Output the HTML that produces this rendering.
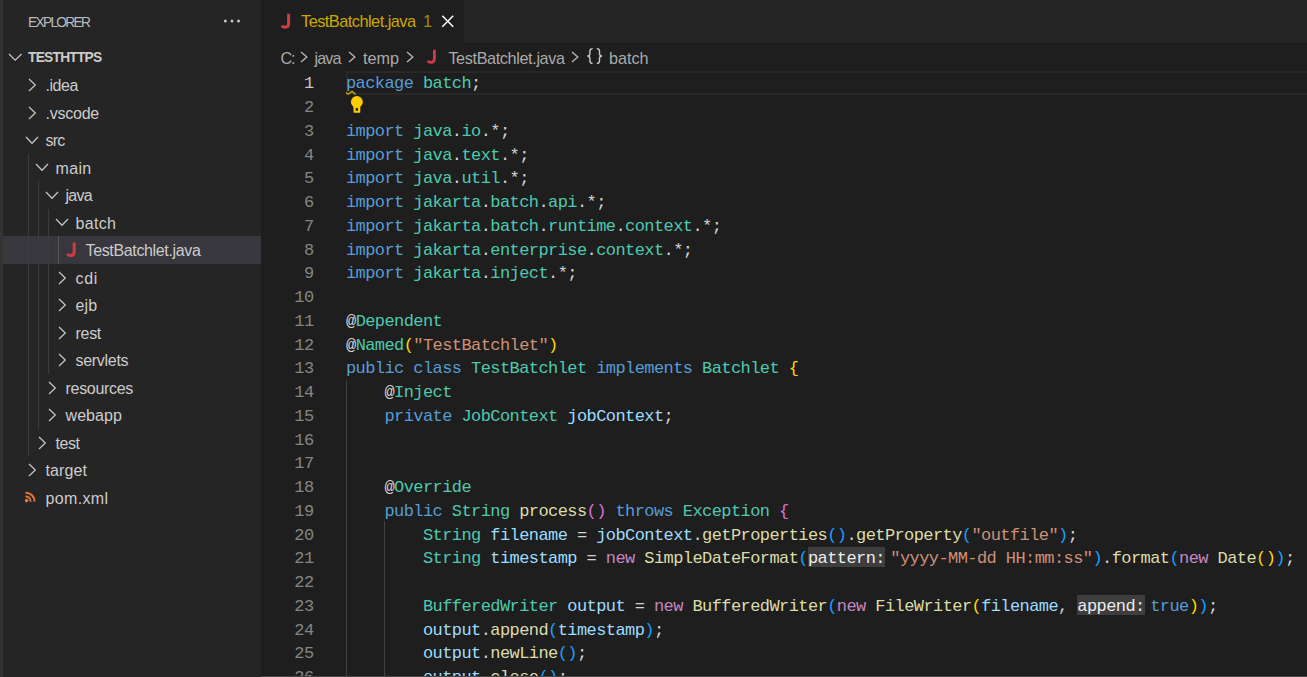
<!DOCTYPE html>
<html><head><meta charset="utf-8">
<style>
*{margin:0;padding:0;box-sizing:border-box}
html,body{width:1307px;height:677px;overflow:hidden;background:#1e1e1e}
body{position:relative;font-family:"Liberation Sans",sans-serif}
.abs{position:absolute}
.t{position:absolute;white-space:pre}
.tree{color:#cccccc;font-size:16px}
.code{position:absolute;left:346px;white-space:pre;font-family:"Liberation Mono",monospace;font-size:17px;letter-spacing:-0.58px;line-height:23.75px;height:23.75px;padding-top:1px;color:#d4d4d4}
.ln{position:absolute;white-space:pre;font-family:"Liberation Mono",monospace;font-size:17px;letter-spacing:-0.58px;line-height:23.75px;padding-top:1px;color:#858585;text-align:right;width:59.6px;left:254px}
.ln.cur{color:#c6c6c6}
.k{color:#569cd6}.ty{color:#4ec9b0}.v{color:#9cdcfe}.f{color:#dcdcaa}.s{color:#ce9178}.n{color:#c586c0}
.b1{color:#ffd700}.b2{color:#da70d6}.b3{color:#179fff}
.hint{display:inline-block;color:#ececec;margin-right:5px}
</style></head><body>
<div class="abs" style="left:0;top:0;width:3px;height:677px;background:#333333"></div>
<div class="abs" style="left:3px;top:0;width:258px;height:677px;background:#252526"></div>
<!-- explorer header -->
<div class="t" style="left:28px;top:0.5px;height:43px;line-height:43px;font-size:13.75px;color:#bbbbbb;letter-spacing:-1.7px">EXPLORER</div>
<svg class="abs" style="left:222px;top:17px" width="20" height="8"><circle cx="3.4" cy="4" r="1.5" fill="#c5c5c5"/><circle cx="10" cy="4" r="1.5" fill="#c5c5c5"/><circle cx="16.5" cy="4" r="1.5" fill="#c5c5c5"/></svg>
<!-- section header -->
<svg class="abs" style="left:8px;top:53px" width="15" height="9"><polyline points="1,1 7.2,7.2 13.6,1" fill="none" stroke="#c5c5c5" stroke-width="1.25"/></svg>
<div class="t" style="left:28px;top:43.75px;height:27.5px;line-height:27.5px;font-size:13.75px;font-weight:bold;color:#cccccc;letter-spacing:-0.75px">TESTHTTPS</div>
<div class="abs" style="left:3px;top:236.25px;width:258px;height:27.5px;background:#37373d"></div>
<div class="abs" style="left:28px;top:153.75px;width:1px;height:302.50px;background:#3b3b3c"></div>
<div class="abs" style="left:38px;top:181.25px;width:1px;height:247.50px;background:#3b3b3c"></div>
<div class="abs" style="left:48px;top:208.75px;width:1px;height:165.00px;background:#3b3b3c"></div>
<div class="abs" style="left:58px;top:236.25px;width:1px;height:27.50px;background:#585858"></div>
<svg class="abs" style="left:27.80px;top:78.00px" width="9" height="14"><polyline points="1,1 7.3,7 1,13" fill="none" stroke="#c5c5c5" stroke-width="1.25"/></svg>
<div class="t tree" style="left:45.50px;top:72.25px;height:27.5px;line-height:27.5px;letter-spacing:-0.47px">.idea</div>
<svg class="abs" style="left:27.80px;top:105.50px" width="9" height="14"><polyline points="1,1 7.3,7 1,13" fill="none" stroke="#c5c5c5" stroke-width="1.25"/></svg>
<div class="t tree" style="left:45.50px;top:99.75px;height:27.5px;line-height:27.5px;letter-spacing:-0.23px">.vscode</div>
<svg class="abs" style="left:25.30px;top:135.50px" width="14" height="9"><polyline points="1,1 7,7.3 13,1" fill="none" stroke="#c5c5c5" stroke-width="1.25"/></svg>
<div class="t tree" style="left:45.50px;top:127.25px;height:27.5px;line-height:27.5px;letter-spacing:-0.75px">src</div>
<svg class="abs" style="left:35.30px;top:163.00px" width="14" height="9"><polyline points="1,1 7,7.3 13,1" fill="none" stroke="#c5c5c5" stroke-width="1.25"/></svg>
<div class="t tree" style="left:55.50px;top:154.75px;height:27.5px;line-height:27.5px;letter-spacing:0.33px">main</div>
<svg class="abs" style="left:45.30px;top:190.50px" width="14" height="9"><polyline points="1,1 7,7.3 13,1" fill="none" stroke="#c5c5c5" stroke-width="1.25"/></svg>
<div class="t tree" style="left:65.50px;top:182.25px;height:27.5px;line-height:27.5px;letter-spacing:-0.77px">java</div>
<svg class="abs" style="left:55.30px;top:218.00px" width="14" height="9"><polyline points="1,1 7,7.3 13,1" fill="none" stroke="#c5c5c5" stroke-width="1.25"/></svg>
<div class="t tree" style="left:75.50px;top:209.75px;height:27.5px;line-height:27.5px;letter-spacing:0.32px">batch</div>
<svg class="abs" style="left:65.80px;top:241.75px" width="12" height="16"><path d="M8.2 0.5 V10 Q8.2 13.6 4.6 13.6 Q2.6 13.6 1.4 11.8" fill="none" stroke="#cc3e44" stroke-width="3"/></svg>
<div class="t tree" style="left:85.50px;top:237.25px;height:27.5px;line-height:27.5px;letter-spacing:-0.35px">TestBatchlet.java</div>
<svg class="abs" style="left:57.80px;top:270.50px" width="9" height="14"><polyline points="1,1 7.3,7 1,13" fill="none" stroke="#c5c5c5" stroke-width="1.25"/></svg>
<div class="t tree" style="left:75.50px;top:264.75px;height:27.5px;line-height:27.5px;letter-spacing:0.7px">cdi</div>
<svg class="abs" style="left:57.80px;top:298.00px" width="9" height="14"><polyline points="1,1 7.3,7 1,13" fill="none" stroke="#c5c5c5" stroke-width="1.25"/></svg>
<div class="t tree" style="left:75.50px;top:292.25px;height:27.5px;line-height:27.5px;letter-spacing:0.1px">ejb</div>
<svg class="abs" style="left:57.80px;top:325.50px" width="9" height="14"><polyline points="1,1 7.3,7 1,13" fill="none" stroke="#c5c5c5" stroke-width="1.25"/></svg>
<div class="t tree" style="left:75.50px;top:319.75px;height:27.5px;line-height:27.5px;letter-spacing:-0.3px">rest</div>
<svg class="abs" style="left:57.80px;top:353.00px" width="9" height="14"><polyline points="1,1 7.3,7 1,13" fill="none" stroke="#c5c5c5" stroke-width="1.25"/></svg>
<div class="t tree" style="left:75.50px;top:347.25px;height:27.5px;line-height:27.5px;letter-spacing:-0.3px">servlets</div>
<svg class="abs" style="left:47.80px;top:380.50px" width="9" height="14"><polyline points="1,1 7.3,7 1,13" fill="none" stroke="#c5c5c5" stroke-width="1.25"/></svg>
<div class="t tree" style="left:65.50px;top:374.75px;height:27.5px;line-height:27.5px;letter-spacing:-0.3px">resources</div>
<svg class="abs" style="left:47.80px;top:408.00px" width="9" height="14"><polyline points="1,1 7.3,7 1,13" fill="none" stroke="#c5c5c5" stroke-width="1.25"/></svg>
<div class="t tree" style="left:65.50px;top:402.25px;height:27.5px;line-height:27.5px;letter-spacing:0.08px">webapp</div>
<svg class="abs" style="left:37.80px;top:435.50px" width="9" height="14"><polyline points="1,1 7.3,7 1,13" fill="none" stroke="#c5c5c5" stroke-width="1.25"/></svg>
<div class="t tree" style="left:55.50px;top:429.75px;height:27.5px;line-height:27.5px;letter-spacing:-0.43px">test</div>
<svg class="abs" style="left:27.80px;top:463.00px" width="9" height="14"><polyline points="1,1 7.3,7 1,13" fill="none" stroke="#c5c5c5" stroke-width="1.25"/></svg>
<div class="t tree" style="left:45.50px;top:457.25px;height:27.5px;line-height:27.5px;letter-spacing:0.12px">target</div>
<svg class="abs" style="left:24px;top:491.25px" width="13" height="13"><circle cx="2.6" cy="9.6" r="1.8" fill="#e37933"/><path d="M1.5 5.6 A4.6 4.6 0 0 1 6.6 10.6" fill="none" stroke="#e37933" stroke-width="1.9"/><path d="M1.5 1.8 A8.4 8.4 0 0 1 10.4 10.6" fill="none" stroke="#e37933" stroke-width="1.9"/></svg>
<div class="t tree" style="left:45.50px;top:484.75px;height:27.5px;line-height:27.5px;letter-spacing:0.35px">pom.xml</div>
<!-- tabs -->
<div class="abs" style="left:261px;top:0;width:1046px;height:43px;background:#252526"></div>
<div class="abs" style="left:261px;top:0;width:203px;height:43px;background:#1e1e1e"></div>
<svg class="abs" style="left:280px;top:13px" width="13" height="17"><path d="M8.6 0.8 V10.5 Q8.6 14.2 5 14.2 Q3 14.2 1.8 12.6" fill="none" stroke="#cc3e44" stroke-width="3"/></svg>
<div class="t" style="left:301px;top:0px;height:43px;line-height:43px;font-size:16.4px;color:#cca700;letter-spacing:-0.55px">TestBatchlet.java</div>
<div class="t" style="left:423px;top:0;height:43px;line-height:43px;font-size:16.4px;color:#a08a0c">1</div>
<svg class="abs" style="left:441px;top:15px" width="13" height="13"><path d="M1.3 0.8 L12.2 11.7 M12.2 0.8 L1.3 11.7" stroke="#ffffff" stroke-width="1.5"/></svg>
<!-- breadcrumbs -->
<div class="t bc" style="left:280.5px;top:43.5px;height:28px;line-height:28px;font-size:16.2px;color:#a9a9a9;letter-spacing:-1.2px">C:</div>
<svg class="abs" style="left:300px;top:51px" width="9" height="12"><polyline points="1,1 6.8,6 1,11" fill="none" stroke="#b4b4b4" stroke-width="1.4"/></svg>
<div class="t bc" style="left:314.5px;top:43.5px;height:28px;line-height:28px;font-size:16.2px;color:#a9a9a9;letter-spacing:-0.9px">java</div>
<svg class="abs" style="left:348.2px;top:51px" width="9" height="12"><polyline points="1,1 6.8,6 1,11" fill="none" stroke="#b4b4b4" stroke-width="1.4"/></svg>
<div class="t bc" style="left:363px;top:43.5px;height:28px;line-height:28px;font-size:16.2px;color:#a9a9a9">temp</div>
<svg class="abs" style="left:405.9px;top:51px" width="9" height="12"><polyline points="1,1 6.8,6 1,11" fill="none" stroke="#b4b4b4" stroke-width="1.4"/></svg>
<svg class="abs" style="left:426px;top:49px" width="13" height="16"><path d="M8.4 0.8 V9.8 Q8.4 13.4 4.9 13.4 Q2.9 13.4 1.7 11.8" fill="none" stroke="#cc3e44" stroke-width="2.8"/></svg>
<div class="t bc" style="left:448.4px;top:43.5px;height:28px;line-height:28px;font-size:16.2px;color:#a9a9a9;letter-spacing:-0.36px">TestBatchlet.java</div>
<svg class="abs" style="left:571.2px;top:51px" width="9" height="12"><polyline points="1,1 6.8,6 1,11" fill="none" stroke="#b4b4b4" stroke-width="1.4"/></svg>
<svg class="abs" style="left:586px;top:47px" width="18" height="18"><path d="M6.6 1.6 Q3.9 1.6 3.9 4 V6.9 Q3.9 8.6 1.4 9 Q3.9 9.4 3.9 11.1 V14 Q3.9 16.4 6.6 16.4 M10.8 1.6 Q13.5 1.6 13.5 4 V6.9 Q13.5 8.6 16 9 Q13.5 9.4 13.5 11.1 V14 Q13.5 16.4 10.8 16.4" fill="none" stroke="#c8c8c8" stroke-width="1.4"/></svg>
<div class="t bc" style="left:609px;top:43.5px;height:28px;line-height:28px;font-size:16.2px;color:#a9a9a9">batch</div>
<!-- editor -->
<div class="abs" style="left:346px;top:71px;width:970px;height:24px;border:2px solid #282828"></div>
<div class="abs" style="left:346px;top:380px;width:1px;height:297px;background:#404040"></div>
<div class="abs" style="left:384px;top:521px;width:1px;height:156px;background:#404040"></div>
<div class="abs" style="left:807.8px;top:547px;width:77.4px;height:20px;background:#3e3e3e"></div>
<div class="abs" style="left:1076.9px;top:595px;width:68.3px;height:20px;background:#3e3e3e"></div>
<div class="ln cur" style="top:71.25px">1</div>
<div class="code" style="top:71.25px"><span class="k">package</span> <span class="ty">batch</span>;</div>
<div class="ln" style="top:95.00px">2</div>
<div class="ln" style="top:118.75px">3</div>
<div class="code" style="top:118.75px"><span class="k">import</span> <span class="ty">java</span>.<span class="ty">io</span>.*;</div>
<div class="ln" style="top:142.50px">4</div>
<div class="code" style="top:142.50px"><span class="k">import</span> <span class="ty">java</span>.<span class="ty">text</span>.*;</div>
<div class="ln" style="top:166.25px">5</div>
<div class="code" style="top:166.25px"><span class="k">import</span> <span class="ty">java</span>.<span class="ty">util</span>.*;</div>
<div class="ln" style="top:190.00px">6</div>
<div class="code" style="top:190.00px"><span class="k">import</span> <span class="ty">jakarta</span>.<span class="ty">batch</span>.<span class="ty">api</span>.*;</div>
<div class="ln" style="top:213.75px">7</div>
<div class="code" style="top:213.75px"><span class="k">import</span> <span class="ty">jakarta</span>.<span class="ty">batch</span>.<span class="ty">runtime</span>.<span class="ty">context</span>.*;</div>
<div class="ln" style="top:237.50px">8</div>
<div class="code" style="top:237.50px"><span class="k">import</span> <span class="ty">jakarta</span>.<span class="ty">enterprise</span>.<span class="ty">context</span>.*;</div>
<div class="ln" style="top:261.25px">9</div>
<div class="code" style="top:261.25px"><span class="k">import</span> <span class="ty">jakarta</span>.<span class="ty">inject</span>.*;</div>
<div class="ln" style="top:285.00px">10</div>
<div class="ln" style="top:308.75px">11</div>
<div class="code" style="top:308.75px">@<span class="ty">Dependent</span></div>
<div class="ln" style="top:332.50px">12</div>
<div class="code" style="top:332.50px">@<span class="ty">Named</span><span class="b1">(</span><span class="s">&quot;TestBatchlet&quot;</span><span class="b1">)</span></div>
<div class="ln" style="top:356.25px">13</div>
<div class="code" style="top:356.25px"><span class="k">public</span> <span class="k">class</span> <span class="ty">TestBatchlet</span> <span class="k">implements</span> <span class="ty">Batchlet</span> <span class="b1">{</span></div>
<div class="ln" style="top:380.00px">14</div>
<div class="code" style="top:380.00px">    @<span class="ty">Inject</span></div>
<div class="ln" style="top:403.75px">15</div>
<div class="code" style="top:403.75px">    <span class="k">private</span> <span class="ty">JobContext</span> <span class="v">jobContext</span>;</div>
<div class="ln" style="top:427.50px">16</div>
<div class="ln" style="top:451.25px">17</div>
<div class="ln" style="top:475.00px">18</div>
<div class="code" style="top:475.00px">    @<span class="ty">Override</span></div>
<div class="ln" style="top:498.75px">19</div>
<div class="code" style="top:498.75px">    <span class="k">public</span> <span class="ty">String</span> <span class="f">process</span><span class="b2">()</span> <span class="k">throws</span> <span class="ty">Exception</span> <span class="b2">{</span></div>
<div class="ln" style="top:522.50px">20</div>
<div class="code" style="top:522.50px">        <span class="ty">String</span> <span class="v">filename</span> = <span class="v">jobContext</span>.<span class="f">getProperties</span><span class="b3">()</span>.<span class="f">getProperty</span><span class="b3">(</span><span class="s">&quot;outfile&quot;</span><span class="b3">)</span>;</div>
<div class="ln" style="top:546.25px">21</div>
<div class="code" style="top:546.25px">        <span class="ty">String</span> <span class="v">timestamp</span> = <span class="n">new</span> <span class="f">SimpleDateFormat</span><span class="b3">(</span><span class="hint" style="width:77.46px">pattern:</span><span class="s">&quot;yyyy-MM-dd HH:mm:ss&quot;</span><span class="b3">)</span>.<span class="f">format</span><span class="b3">(</span><span class="n">new</span> <span class="f">Date</span><span class="b1">()</span><span class="b3">)</span>;</div>
<div class="ln" style="top:570.00px">22</div>
<div class="ln" style="top:593.75px">23</div>
<div class="code" style="top:593.75px">        <span class="ty">BufferedWriter</span> <span class="v">output</span> = <span class="n">new</span> <span class="f">BufferedWriter</span><span class="b3">(</span><span class="n">new</span> <span class="f">FileWriter</span><span class="b1">(</span><span class="v">filename</span>, <span class="hint" style="width:67.84px">append:</span><span class="k">true</span><span class="b1">)</span><span class="b3">)</span>;</div>
<div class="ln" style="top:617.50px">24</div>
<div class="code" style="top:617.50px">        <span class="v">output</span>.<span class="f">append</span><span class="b3">(</span><span class="v">timestamp</span><span class="b3">)</span>;</div>
<div class="ln" style="top:641.25px">25</div>
<div class="code" style="top:641.25px">        <span class="v">output</span>.<span class="f">newLine</span><span class="b3">()</span>;</div>
<div class="ln" style="top:665.00px">26</div>
<div class="code" style="top:665.00px">        <span class="v">output</span>.<span class="f">close</span><span class="b3">()</span>;</div>
<svg class="abs" style="left:345px;top:90px" width="13" height="7"><polyline points="1,2.6 3.2,4.3 7,1.4 10.7,4.5" fill="none" stroke="#cca700" stroke-width="1.4" stroke-linejoin="round"/></svg>
<svg class="abs" style="left:350px;top:95px" width="14" height="19"><circle cx="6.85" cy="6.9" r="5.95" fill="#ffcc00"/><path d="M3.3 10.5 L10.4 10.5 L10.2 17.8 L3.7 17.8 Z" fill="#ffcc00"/><rect x="5.7" y="13.1" width="2.3" height="2.7" fill="#1e1e1e"/></svg>
<div class="abs" style="left:261px;top:676px;width:1046px;height:1px;background:#474747"></div>
</body></html>
